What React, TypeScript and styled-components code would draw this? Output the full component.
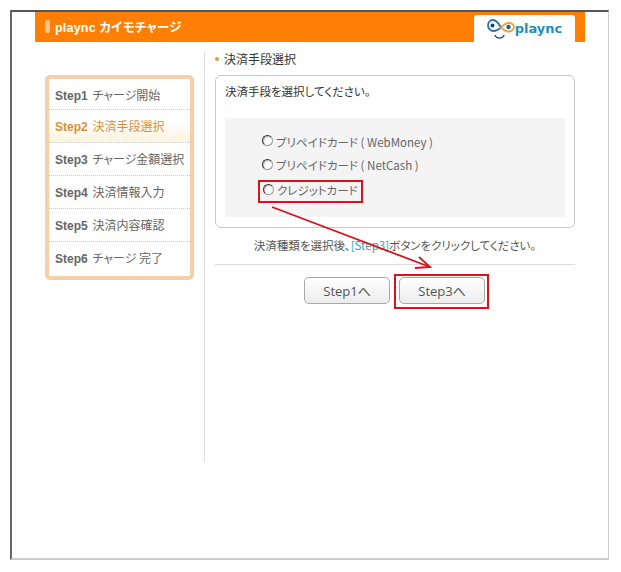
import React, { FC } from 'react';
import styled, { createGlobalStyle } from 'styled-components';

const JP = '"Noto Sans CJK JP", "Liberation Sans", sans-serif';
const LATIN = '"Liberation Sans", "Noto Sans CJK JP", sans-serif';

const steps = [
  { no: 'Step1', label: 'チャージ開始' },
  { no: 'Step2', label: '決済手段選択', active: true },
  { no: 'Step3', label: 'チャージ金額選択' },
  { no: 'Step4', label: '決済情報入力' },
  { no: 'Step5', label: '決済内容確認' },
  { no: 'Step6', label: 'チャージ 完了' }
];

const Logo: FC = () => (
  <LogoWrap>
    <svg width="28" height="22" viewBox="0 0 28 22" fill="none">
      <path
        d="M14 9.500C11.500 5 9 2 6 2 3 2 1 4.500 1 7.500S3.500 13 6.500 13c2.500 0 5-1.500 7.500-3.500"
        stroke="#2a6fa8"
        strokeWidth="1.800"
        strokeLinecap="round"
      />
      <path
        d="M14 9.500c2.500 2.500 4.500 4 7.500 4s5.500-2 5.500-4.500-2.500-4-5.500-4-5 2-7.500 4.500z"
        stroke="#e8a33a"
        strokeWidth="1.800"
        strokeLinecap="round"
      />
      <circle cx="5.500" cy="7.500" r="2" fill="#1d3f70" />
      <circle cx="21.500" cy="9" r="2.200" fill="#1d5f90" />
      <path
        d="M8 17.500c2 3.500 7 3.500 9 0"
        stroke="#1d3f70"
        strokeWidth="1.400"
        strokeLinecap="round"
      />
    </svg>
    <LogoText>plaync</LogoText>
  </LogoWrap>
);

export default function App() {
  return (
    <>
      <GlobalStyle />
      <Frame>
        <Banner>
          <BannerTitle>
            <Pill />
            plaync カイモチャージ
          </BannerTitle>
          <LogoTab>
            <Logo />
          </LogoTab>
        </Banner>
        <Body>
          <StepBox>
            {steps.map((s, i) => (
              <StepRow key={s.no} $active={s.active} $last={i === steps.length - 1}>
                <b>{s.no}</b> {s.label}
              </StepRow>
            ))}
          </StepBox>
          <Main>
            <Heading>決済手段選択</Heading>
            <Panel>
              <PanelText>決済手段を選択してください。</PanelText>
              <Options>
                <Option>
                  <Radio type="radio" name="pay" />
                  プリペイドカード ( WebMoney )
                </Option>
                <Option>
                  <Radio type="radio" name="pay" />
                  プリペイドカード ( NetCash )
                </Option>
                <Option $marked>
                  <Radio type="radio" name="pay" />
                  クレジットカード
                </Option>
              </Options>
            </Panel>
            <Notice>
              決済種類を選択後、<StepLink>[Step3]</StepLink>ボタンをクリックしてください。
            </Notice>
            <Actions>
              <Button>Step1へ</Button>
              <Marked>
                <Button>Step3へ</Button>
              </Marked>
            </Actions>
          </Main>
        </Body>
        <Arrow width="170" height="70" viewBox="0 0 170 70" fill="none">
          <path d="M1 1 L159 61" stroke="#d6141c" strokeWidth="1.800" />
          <path d="M144 62 L159 61 L148 51" stroke="#d6141c" strokeWidth="1.800" />
        </Arrow>
      </Frame>
    </>
  );
}

const GlobalStyle = createGlobalStyle`
  html, body {
    margin: 0;
    background: #fff;
  }
  body {
    padding: 10px 0 0 10px;
    font-family: ${JP};
    font-size: 12px;
    font-feature-settings: "palt";
    color: #444;
  }
`;

const Frame = styled.div`
  position: relative;
  box-sizing: border-box;
  width: 599px;
  height: 550px;
  border-style: solid;
  border-color: #555 #ccc #ccc #666;
  border-width: 2px 1px 2px 2px;
`;

const Banner = styled.div`
  display: flex;
  justify-content: space-between;
  align-items: flex-end;
  box-sizing: border-box;
  width: 550px;
  height: 30px;
  margin-left: 23px;
  padding: 3px 10px 0 10px;
  background: #ff7f05;
`;

const BannerTitle = styled.div`
  display: flex;
  align-items: center;
  gap: 5px;
  align-self: center;
  margin-top: -4px;
  font-family: ${LATIN};
  font-size: 12.500px;
  font-weight: bold;
  letter-spacing: 0.200px;
  color: #fff;
`;

const Pill = styled.span`
  width: 5px;
  height: 13px;
  border-radius: 2px;
  background: #fbc48c;
`;

const LogoTab = styled.div`
  display: flex;
  justify-content: center;
  align-items: center;
  width: 101px;
  height: 27px;
  background: #fff;
  border-radius: 3px 3px 0 0;
`;

const LogoWrap = styled.div`
  display: flex;
  align-items: center;
  margin-top: 1px;
`;

const LogoText = styled.span`
  margin-top: -1px;
  font-family: "DejaVu Sans", sans-serif;
  font-size: 13px;
  font-weight: bold;
  color: #1d8fc0;
`;

const Body = styled.div`
  display: flex;
  align-items: flex-start;
  padding-left: 33px;
`;

const StepBox = styled.div`
  box-sizing: border-box;
  width: 149px;
  margin-top: 33px;
  padding: 0 0 1px;
  background: #fff;
  border: 4px solid #f5cfa7;
  border-radius: 5px;
`;

const StepRow = styled.div<{ $active?: boolean; $last?: boolean }>`
  box-sizing: border-box;
  height: 33px;
  padding-left: 6px;
  line-height: 32px;
  white-space: nowrap;
  font-size: 12px;
  color: ${({ $active }) => ($active ? '#dd8f38' : '#666')};
  background: ${({ $active }) =>
    $active ? 'linear-gradient(#fff 40%, #fdf3dd)' : 'transparent'};
  border-bottom: ${({ $last }) => ($last ? '0' : '1px dotted #ccc')};

  &:first-child {
    height: 31px;
  }

  b {
    font-family: ${LATIN};
    font-size: 12px;
    margin-right: 2px;
  }
`;

const Main = styled.div`
  box-sizing: border-box;
  width: 371px;
  height: 410px;
  margin: 10px 0 0 10px;
  padding-left: 10px;
  border-left: 1px solid #ddd;
`;

const Heading = styled.div`
  display: flex;
  align-items: center;
  gap: 5px;
  height: 13px;
  color: #333;

  &::before {
    content: '';
    width: 4px;
    height: 4px;
    margin-top: 1px;
    border-radius: 50%;
    background: #e09a50;
  }
`;

const Panel = styled.div`
  box-sizing: border-box;
  height: 153px;
  margin-top: 10px;
  padding: 7px 9px 0;
  border: 1px solid #c8c8c8;
  border-radius: 6px;
`;

const PanelText = styled.div`
  height: 35px;
  font-size: 11.500px;
  line-height: 16px;
  color: #333;
`;

const Options = styled.div`
  box-sizing: border-box;
  height: 99px;
  padding: 12px 0 0 37px;
  background: #f4f4f4;
`;

const Option = styled.label<{ $marked?: boolean }>`
  display: flex;
  align-items: center;
  gap: 3px;
  box-sizing: border-box;
  height: 23.500px;
  white-space: nowrap;
  font-size: 11.500px;
  color: #666;

  ${({ $marked }) =>
    $marked &&
    `
    width: 105px;
    height: 23px;
    margin: 3px 0 0 -4px;
    padding: 0 0 3px 3px;
    border: 2px solid #d6141c;
  `}
`;

const Radio = styled.input`
  appearance: none;
  flex: none;
  width: 11px;
  height: 11px;
  margin: 0;
  margin-top: -2px;
  background: #fff;
  border: 1px solid #999;
  border-top-color: #333;
  border-left-color: #333;
  border-radius: 50%;
  box-shadow: inset 1px 1px 1px #bbb;
`;

const Notice = styled.div`
  margin-top: 9px;
  height: 17px;
  font-size: 11.500px;
  line-height: 17px;
  text-align: center;
  color: #555;
`;

const StepLink = styled.span`
  color: #3aa0a8;
`;

const Actions = styled.div`
  display: flex;
  align-items: flex-start;
  gap: 4px;
  margin-top: 10px;
  padding: 12px 0 0 89px;
  border-top: 1px solid #ddd;
`;

const Button = styled.button`
  box-sizing: border-box;
  width: 86px;
  height: 27px;
  padding: 0;
  font-family: "Open Sans", ${JP};
  font-size: 13px;
  color: #555;
  background: linear-gradient(#fff, #ececec);
  border: 1px solid #a8a8a8;
  border-radius: 5px;
`;

const Marked = styled.div`
  display: flex;
  padding: 1px 2px 3px 3px;
  margin-top: -3px;
  border: 2px solid #d6141c;
`;

const Arrow = styled.svg`
  position: absolute;
  left: 259px;
  top: 194px;
`;
